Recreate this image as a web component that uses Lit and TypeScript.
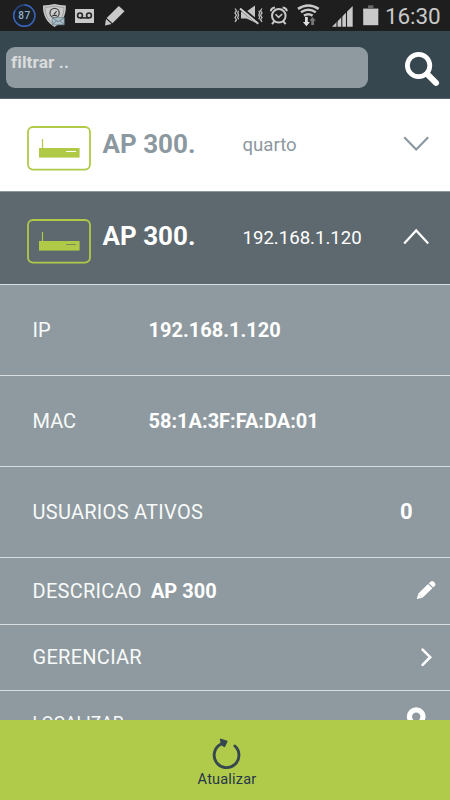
import { LitElement, html, css, svg } from "lit";
import { customElement, property } from "lit/decorators.js";

@customElement("status-bar")
class StatusBar extends LitElement {
  static styles = css`
    :host { display: flex; height: 31px; background: #1e1e1e; position: relative; justify-content: space-between; color: #c9c9c9; }
    svg { display: block; flex: none; }
    .badge { font: 500 10px Roboto, sans-serif; letter-spacing: 0.4px; }
    .right { display: flex; }
    .clock { width: 65px; font: 400 22.5px/32px Roboto, sans-serif; letter-spacing: -0.1px; }
  `;
  render() {
    return html`
      <svg width="135" height="31" viewBox="0 0 135 31">
        <circle cx="24.3" cy="15.7" r="10.6" fill="#1a2027" stroke="#26457c" stroke-width="1.5" />
        <path d="M24.3 5.1A10.6 10.6 0 1 1 15 10.6" fill="none" stroke="#3a63b4" stroke-width="1.5" />
        <text class="badge" x="24.4" y="19.4" text-anchor="middle" fill="#8fb0cc">87</text>
        <path d="M54.5 4Q60 5.2 65.8 5.6Q66.5 20 54.5 27Q42.5 20 43 5.6Q49 5.2 54.5 4Z" fill="#c9c9c9" />
        <path d="M54.5 5.9Q59 7.2 64 7.4Q64.3 19 54.5 24.8Q44.7 19 45 7.4Q50 7.2 54.5 5.9Z" fill="none" stroke="#909293" stroke-width=".8" />
        <circle cx="54.6" cy="13" r="4.6" fill="#cfcfcf" stroke="#484848" stroke-width="1.3" />
        <path d="M54 14.2L56.6 11.3M52.4 15.4H56.8" stroke="#333" stroke-width="1.1" />
        <path d="M52.3 17.6H64.2V24.8H52.3Z" fill="#a9bdc6" stroke="#6e818b" stroke-width=".7" />
        <path d="M52.5 17.8L58.2 21.8L64 17.8M52.5 24.5L56.5 20.8M64 24.5L60 20.8" fill="none" stroke="#5f747f" stroke-width=".8" />
        <rect x="75" y="9" width="19" height="14" fill="#c9c9c9" />
        <g fill="none" stroke="#272727" stroke-width="1.6">
          <circle cx="80" cy="15.4" r="2.4" /><circle cx="89" cy="15.4" r="2.4" /><path d="M80 17.9H89" />
        </g>
        <path d="M118.8 6L124.5 11.2L112.5 23.2L106.7 18Z" fill="#c9c9c9" />
        <path d="M106 19L111.6 24.1L105 25.4Z" fill="#c9c9c9" />
      </svg>
      <div class="right">
        <svg width="155" height="31" viewBox="230 0 155 31">
          <g fill="none" stroke="#bdbdbd" stroke-width="1.3">
            <path d="M235 8.5l1.5 2.2l-1.5 2.2l1.5 2.3l-1.5 2.3l1.5 2.2l-1.5 2.2M238.6 10.7l-.9 2l.9 2.2l-.9 2.3l.9 2" />
            <path d="M262 8.5l-1.5 2.2l1.5 2.2l-1.5 2.3l1.5 2.3l-1.5 2.2l1.5 2.2M258.8 10.7l.9 2l-.9 2.2l.9 2.3l-.9 2" />
          </g>
          <path d="M241 11.5H246.5L255 5.5V22.5L246.5 18.5H241Z" fill="#c4c4c4" />
          <path d="M240.5 8L259 23.2" stroke="#1e1e1e" stroke-width="4" />
          <path d="M240 8.6L258.3 23.8" stroke="#cfcfcf" stroke-width="2" />
          <g fill="none" stroke="#c9c9c9">
            <circle cx="278.8" cy="15.8" r="6.8" stroke-width="2" />
            <path d="M275.5 14.3L278.6 17.3L282.2 14" stroke-width="1.6" />
            <path d="M270.8 11.2Q271 8.2 275 7.6M286.8 11.2Q286.6 8.2 282.6 7.6" stroke-width="2" />
            <path d="M274.4 21.2L272 24.2M283.2 21.2L285.6 24.2" stroke-width="2" />
          </g>
          <g fill="none" stroke="#c9c9c9" stroke-width="2.5">
            <path d="M298 8.9Q308.3 1.9 318.7 8.9" /><path d="M301 12.3Q308.3 7.3 315.8 12.3" /><path d="M304 15.6Q308.3 12.7 312.6 15.6" />
          </g>
          <path d="M305 17h2.8v5h2.2L306.4 26.3L302.9 22H305Z" fill="#dedede" />
          <path d="M311.2 25v-4.2H309.3L312.5 17L315.9 20.8H314V25Z" fill="#777" />
          <path d="M332 26.7L352.7 6V26.7Z" fill="#c9c9c9" />
          <path d="M337 5V27M341.8 5V27M346.5 5V27" stroke="#1e1e1e" stroke-width="1.1" />
          <path d="M368 5.3H373.4V8H378.3V11H363.2V8H368Z" fill="#666" />
          <rect x="363.2" y="9" width="15.1" height="16.2" fill="#c9c9c9" />
        </svg>
        <span class="clock">16:30</span>
      </div>`;
  }
}

@customElement("search-header")
class SearchHeader extends LitElement {
  static styles = css`
    :host { display: flex; height: 68px; box-sizing: border-box; padding: 16px 0 0 6px; background: #37474f; border-bottom: 1px solid #53616a; }
    .field { width: 362px; height: 41px; box-sizing: border-box; border-radius: 9px; background: #8f9aa0; padding-left: 5px;
      font: 700 17.4px/31px Roboto, sans-serif; letter-spacing: 0.05px; color: #d9dbdc; }
    svg { display: block; margin-left: 34px; }
  `;
  render() {
    return html`<div class="field">filtrar ..</div>
      <svg width="42" height="42" viewBox="402 47 42 42" fill="none" stroke="#fff">
        <circle cx="418.6" cy="65.5" r="11.2" stroke-width="4.8" />
        <path d="M427.5 74.4L436 82.8" stroke-width="6" stroke-linecap="round" />
      </svg>`;
  }
}

@customElement("device-header")
class DeviceHeader extends LitElement {
  @property() name = "";
  @property() detail = "";
  @property({ type: Boolean, reflect: true }) open = false;
  static styles = css`
    :host { display: grid; grid-template-columns: 75.5px 140px 160.5px 1fr; padding-left: 27px; height: 92px; line-height: 92px;
      background: #fff; color: #8c989f; font-family: Roboto, sans-serif; border-bottom: 1px solid #8e989d; }
    :host([open]) { background: #5e696f; color: #fff; border-bottom: 1px solid #dcdfe0; }
    .name { font-size: 26px; font-weight: 700; height: 90px; line-height: 90px; }
    :host([open]) .name { height: 88px; line-height: 88px; }
    .detail { font-size: 18.6px; }
    .router { margin-top: 27px; }
    .arrow { margin-top: 34px; }
    svg { display: block; }
  `;
  render() {
    return html`
      <svg class="router" width="65" height="46" viewBox="0 0 65 46">
        <rect x="1" y="1" width="62" height="42.6" rx="5" fill="none" stroke="#b0ca48" stroke-width="1.8" />
        <path d="M15.5 13V23" stroke="#b0ca48" stroke-width="1.2" />
        <rect x="12" y="22" width="40.6" height="9.6" fill="#b0ca48" />
        <path d="M39 25.5H49" stroke=${this.open ? "#7d8b5a" : "#fff"} stroke-width="1" />
      </svg>
      <span class="name">${this.name}</span>
      <span class="detail">${this.detail}</span>
      <svg class="arrow" width="28" height="20" viewBox="0 0 28 20" fill="none" stroke="currentColor" stroke-width="2.2">
        <path d=${this.open ? "M1.2 17.5L13.2 4.4L25.2 17.5" : "M1.2 4.2L13.2 16.4L25.2 4.2"} />
      </svg>`;
  }
}

const icons: Record<string, unknown> = {
  pencil: svg`<path d="M18.8 20L20.2 14.8L30 5L34.4 9.2L24.4 18.8Z" fill="#fff"/><path d="M30.8 4.2L32.8 2.4Q34.2 1.4 35.5 2.6L36.9 4Q38.1 5.4 37 6.8L35.2 8.5Z" fill="#fff"/><path d="M20.4 15L23.9 18.6" stroke="#b6bec2" stroke-width=".6"/>`,
  chevron: svg`<path d="M24.6 4.6L32.2 12.2L24.6 19.8" fill="none" stroke="#fff" stroke-width="2.6" stroke-linecap="round"/>`,
  pin: svg`<path d="M11.4 4.6a6.8 6.8 0 1 1 13.6 0c0 4-4 8-6.8 14c-2.8-6-6.8-10-6.8-14Z" fill="none" stroke="#fff" stroke-width="5.2"/>`,
};

@customElement("info-row")
class InfoRow extends LitElement {
  @property() label = "";
  @property() value = "";
  @property() count = "";
  @property() icon = "";
  @property({ type: Boolean, reflect: true }) wide = false;
  @property({ type: Boolean, reflect: true }) short = false;
  @property({ type: Boolean, reflect: true }) small = false;
  static styles = css`
    :host { display: flex; align-items: center; height: 91.1px; box-sizing: border-box; padding-left: 32.5px; background: #8f9aa0;
      border-bottom: 1px solid #dadddf; color: #fff; font: 400 20px/24px Roboto, sans-serif; }
    :host([short]) { height: 66.3px; }
    .label { color: #f8fafa; letter-spacing: 0.28px; }
    :host([small]) .label { font-size: 17.6px; letter-spacing: 0; padding-bottom: 2px; }
    :host([wide]) .label { width: 116px; letter-spacing: 0; }
    .value { font-weight: 700; }
    :host([short]) .value { margin-left: 9px; }
    .count { font-weight: 700; font-size: 22px; margin-left: auto; margin-right: 37.5px; }
    svg { display: block; margin-left: auto; margin-right: 10px; overflow: visible; }
  `;
  render() {
    return html`<span class="label">${this.label}</span>
      ${this.value ? html`<span class="value">${this.value}</span>` : ""}
      ${this.count ? html`<span class="count">${this.count}</span>` : ""}
      ${this.icon ? html`<svg width="42" height="24" viewBox="0 0 42 24">${icons[this.icon]}</svg>` : ""}`;
  }
}

@customElement("app-root")
class AppRoot extends LitElement {
  static styles = css`
    :host { display: flex; flex-direction: column; width: 450px; height: 800px; overflow: hidden; background: #8f9aa0; }
    .list { flex: 1; min-height: 0; overflow: hidden; }
    .footer { flex: none; height: 80.5px; box-sizing: border-box; background: #b0ca4a; padding: 16.5px 0 0 4px; display: flex; flex-direction: column; align-items: center;
      font: 400 14.5px/19px Roboto, sans-serif; letter-spacing: 0.2px; color: #26364a; }
    svg { display: block; }
  `;
  render() {
    return html`
      <status-bar></status-bar>
      <search-header></search-header>
      <div class="list">
        <device-header name="AP 300." detail="quarto"></device-header>
        <device-header name="AP 300." detail="192.168.1.120" open></device-header>
        <info-row wide label="IP" value="192.168.1.120"></info-row>
        <info-row wide label="MAC" value="58:1A:3F:FA:DA:01"></info-row>
        <info-row label="USUARIOS ATIVOS" count="0"></info-row>
        <info-row short label="DESCRICAO" value="AP 300" icon="pencil"></info-row>
        <info-row short label="GERENCIAR" icon="chevron"></info-row>
        <info-row short small label="LOCALIZAR" icon="pin"></info-row>
      </div>
      <div class="footer">
        <svg width="34" height="34" viewBox="210 736 34 34">
          <path d="M234.9 746A12.4 12.4 0 1 1 221.2 744" fill="none" stroke="#37474f" stroke-width="2.9" stroke-linecap="round" />
          <path d="M220.3 739L227.2 741.2L224.6 746.8L221.4 745Z" fill="#37474f" stroke="#37474f" stroke-linejoin="round" />
        </svg>
        <span>Atualizar</span>
      </div>`;
  }
}
